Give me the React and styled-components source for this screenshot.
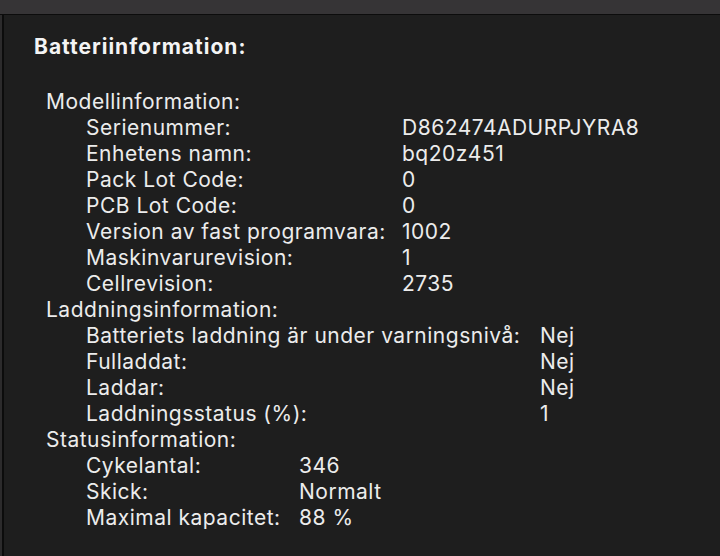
import React from "react";
import styled, { createGlobalStyle } from "styled-components";

const Global = createGlobalStyle`
  html, body { margin: 0; padding: 0; background: #1e1e1e; }
  body { font-family: Inter, "Noto Sans", "Liberation Sans", sans-serif; }
  #root { width: 720px; height: 556px; overflow: hidden; }
`;

const Window = styled.div`
  display: flex;
  flex-direction: column;
  width: 720px;
  height: 556px;
  background: #1e1e1e;
`;

const TopBar = styled.div`
  height: 14px;
  flex: none;
  background: #363436;
  border-bottom: 1px solid #0c0c0c;
`;

const Body = styled.div`
  flex: 1;
  display: flex;
`;

const Edge = styled.div`
  width: 2px;
  flex: none;
  background: #2c2b2c;
  border-right: 2px solid #0c0c0c;
`;

const Content = styled.div`
  flex: 1;
  padding: 19px 0 0 30px;
  color: #ececec;
  font-size: 21px;
  line-height: 26px;
  letter-spacing: 0.5px;
`;

const Heading = styled.div`
  font-weight: 700;
  color: #f4f4f4;
  letter-spacing: 1px;
  margin-bottom: 29px;
`;

const Section = styled.div`
  padding-left: 12px;
`;

const SectionTitle = styled.div``;

const Table = styled.div`
  display: grid;
  grid-template-columns: ${(p) => p.$labelWidth}px auto;
  padding-left: 40px;
`;

const Cell = styled.div`
  white-space: nowrap;
`;

const groups = [
  {
    title: "Modellinformation:",
    width: 316,
    rows: [
      ["Serienummer:", "D862474ADURPJYRA8"],
      ["Enhetens namn:", "bq20z451"],
      ["Pack Lot Code:", "0"],
      ["PCB Lot Code:", "0"],
      ["Version av fast programvara:", "1002"],
      ["Maskinvarurevision:", "1"],
      ["Cellrevision:", "2735"],
    ],
  },
  {
    title: "Laddningsinformation:",
    width: 454,
    rows: [
      ["Batteriets laddning är under varningsnivå:", "Nej"],
      ["Fulladdat:", "Nej"],
      ["Laddar:", "Nej"],
      ["Laddningsstatus (%):", "1"],
    ],
  },
  {
    title: "Statusinformation:",
    width: 213,
    rows: [
      ["Cykelantal:", "346"],
      ["Skick:", "Normalt"],
      ["Maximal kapacitet:", "88 %"],
    ],
  },
];

export default function App() {
  return (
    <>
      <Global />
      <Window>
        <TopBar />
        <Body>
          <Edge />
          <Content>
            <Heading>Batteriinformation:</Heading>
            {groups.map((g) => (
              <Section key={g.title}>
                <SectionTitle>{g.title}</SectionTitle>
                <Table $labelWidth={g.width}>
                  {g.rows.map(([k, v]) => (
                    <React.Fragment key={k}>
                      <Cell>{k}</Cell>
                      <Cell>{v}</Cell>
                    </React.Fragment>
                  ))}
                </Table>
              </Section>
            ))}
          </Content>
        </Body>
      </Window>
    </>
  );
}
